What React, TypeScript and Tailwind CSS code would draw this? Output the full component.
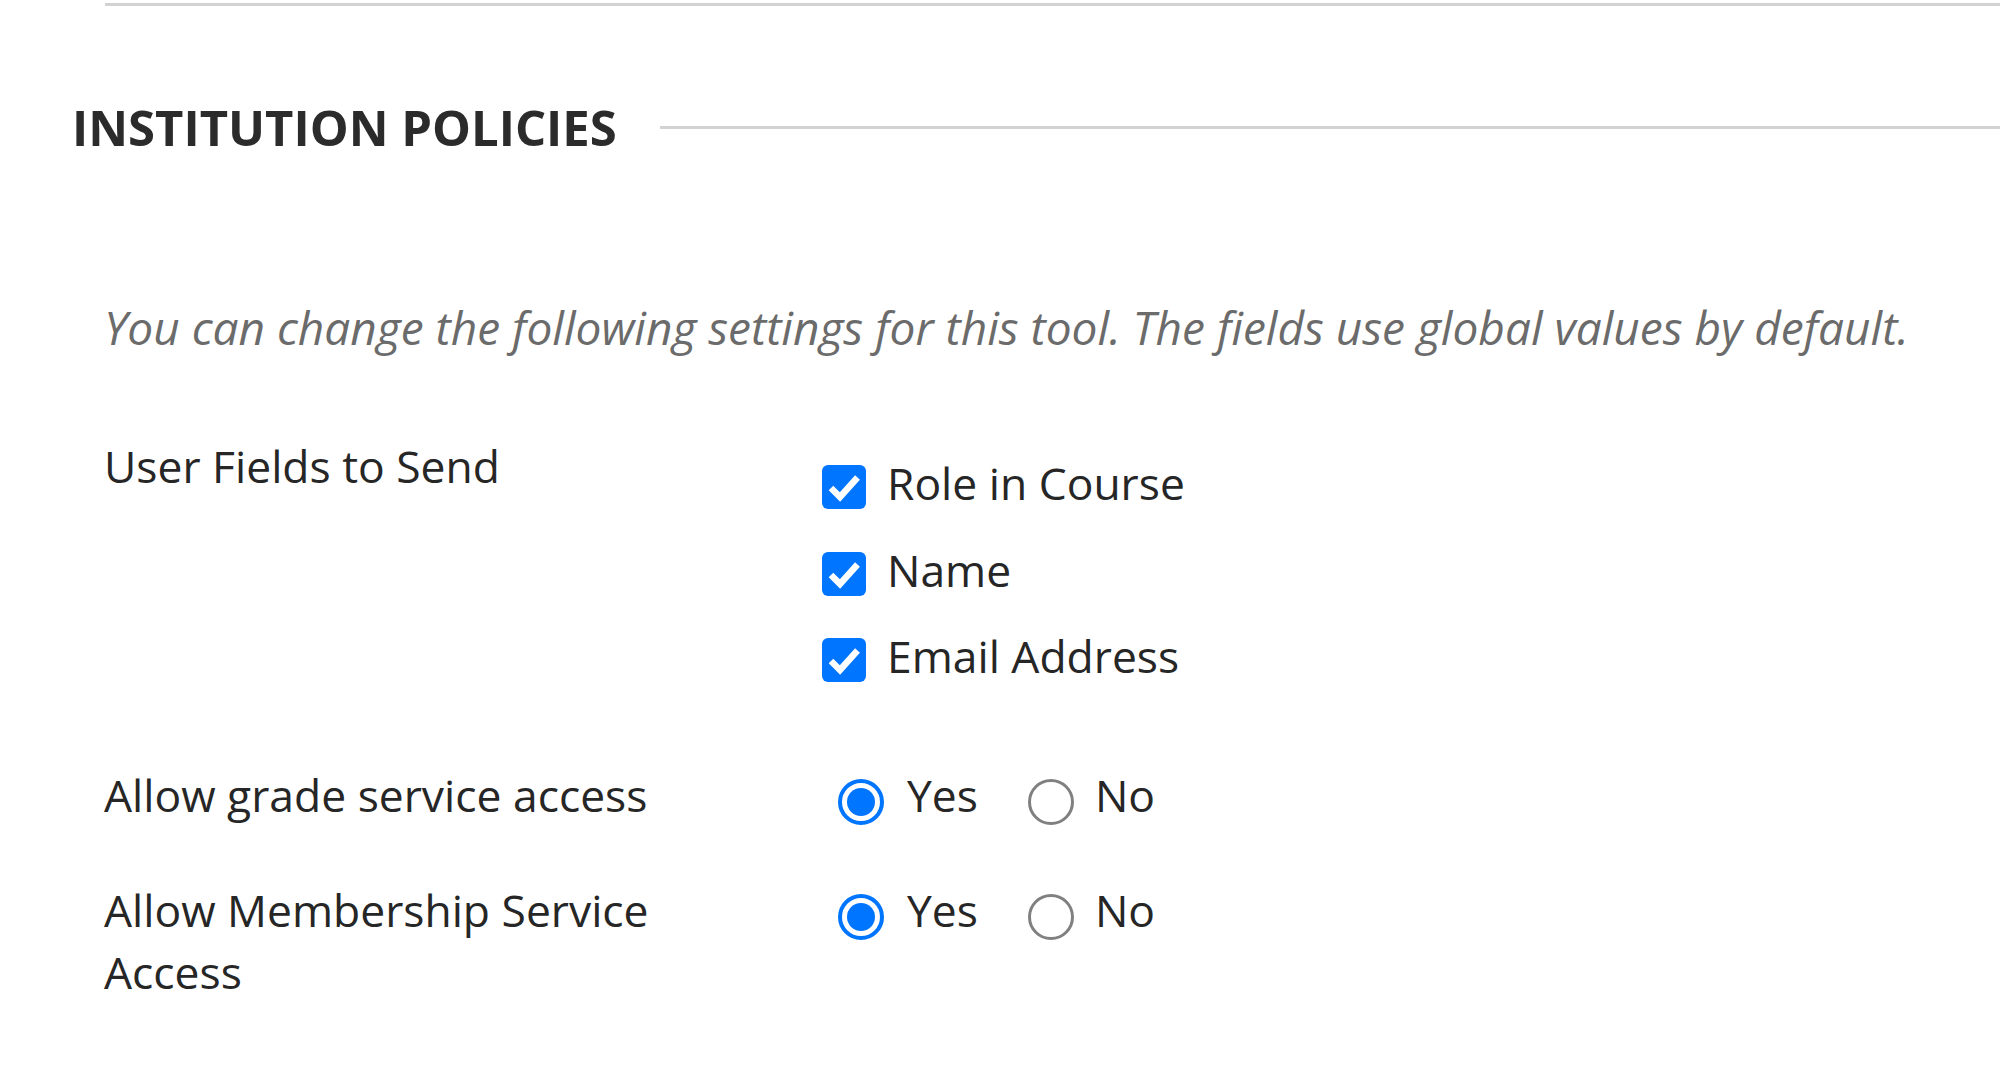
import React from 'react';

type CheckItem = { id: string; label: string; checked: boolean };

const userFields: CheckItem[] = [
  { id: 'role', label: 'Role in Course', checked: true },
  { id: 'name', label: 'Name', checked: true },
  { id: 'email', label: 'Email Address', checked: true },
];

function CheckBox({ checked }: { checked: boolean }) {
  return (
    <span
      className={`mt-[13px] flex h-[44px] w-[44px] shrink-0 items-center justify-center rounded-[6px] ${
        checked ? 'bg-[#0075ff]' : 'border-[3px] border-[#767676] bg-white'
      }`}
    >
      {checked && (
        <svg width="44" height="44" viewBox="0 0 44 44" fill="none">
          <path d="M9 23 L18 32 L35.5 12.5" stroke="white" strokeWidth="6.5" strokeLinejoin="miter" />
        </svg>
      )}
    </span>
  );
}

function Radio({ checked }: { checked: boolean }) {
  if (checked) {
    return (
      <span className="mt-[15px] flex h-[46px] w-[46px] shrink-0 items-center justify-center rounded-full border-[4px] border-[#0075ff] bg-white">
        <span className="h-[28px] w-[28px] rounded-full bg-[#0075ff]" />
      </span>
    );
  }
  return <span className="mt-[15px] h-[46px] w-[46px] shrink-0 rounded-full border-[3px] border-[#808080] bg-white" />;
}

function YesNo({ value }: { value: boolean }) {
  return (
    <div className="ml-[30px] flex items-start">
      <Radio checked={value} />
      <span className="ml-[23px] leading-[62px]">Yes</span>
      <span className="ml-[50px] flex items-start">
        <Radio checked={!value} />
      </span>
      <span className="ml-[21px] leading-[62px]">No</span>
    </div>
  );
}

export default function App() {
  return (
    <div className="h-[1085px] w-[2000px] overflow-hidden bg-white pt-[3px] font-['Open_Sans','Liberation_Sans',sans-serif] text-[#262626]">
      <div className="ml-[105px] h-[3px] bg-[#d2d2d2]" />

      <div className="mt-[89px] flex h-[64px] items-center pl-[72px]">
        <h2 className="text-[49px] font-bold leading-[64px] text-[#2b2b2b]">INSTITUTION POLICIES</h2>
        <div className="ml-[43px] h-[3px] flex-1 bg-[#d2d2d2]" />
      </div>

      <div className="pl-[104px]">
        <p className="mt-[140px] text-[46px] italic leading-[56px] text-[#6b6b6b]">
          You can change the following settings for this tool. The fields use global values by default.
        </p>

        <div className="mt-[80px] flex text-[44.4px] leading-[62px]">
          <div className="w-[620px]">User Fields to Send</div>
          <div className="ml-[84px] flex flex-col gap-[24.5px] pt-[17px]">
            {userFields.map((f) => (
              <label key={f.id} className="ml-[14px] flex h-[62px] items-start">
                <CheckBox checked={f.checked} />
                <span className="ml-[21px]">{f.label}</span>
              </label>
            ))}
          </div>
        </div>

        <div className="mt-[77px] flex text-[44.4px] leading-[62px]">
          <div className="w-[620px]">Allow grade service access</div>
          <div className="ml-[84px]">
            <YesNo value={true} />
          </div>
        </div>

        <div className="mt-[53px] flex text-[44.4px] leading-[62px]">
          <div className="w-[620px]">Allow Membership Service Access</div>
          <div className="ml-[84px]">
            <YesNo value={true} />
          </div>
        </div>
      </div>
    </div>
  );
}
